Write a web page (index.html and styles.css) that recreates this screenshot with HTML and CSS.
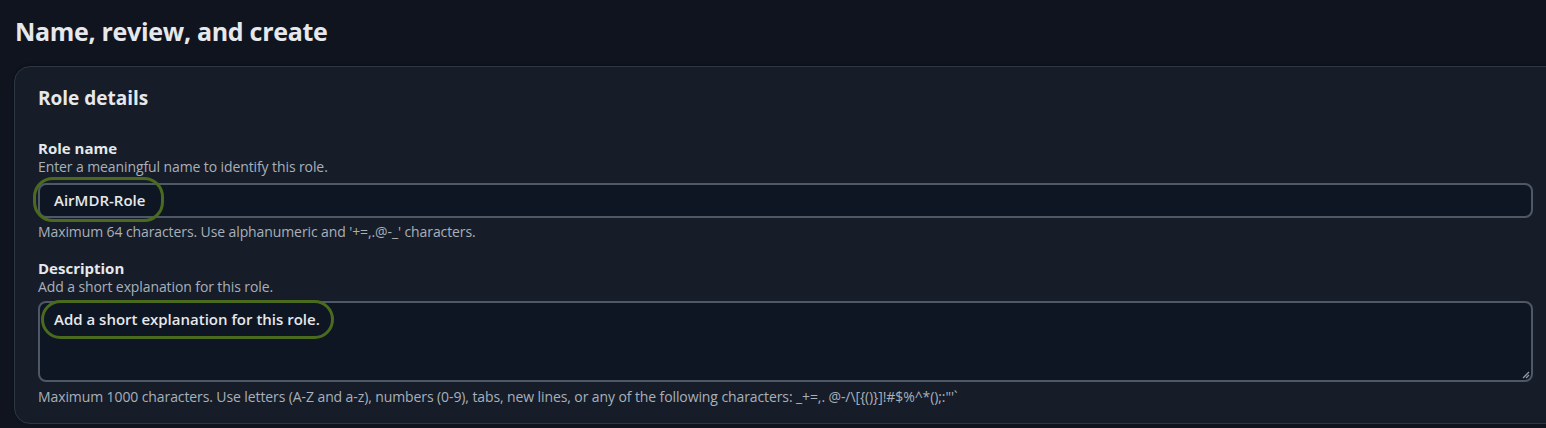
FILE: index.html
```html
<!DOCTYPE html>
<html>
<head>
<meta charset="utf-8">
<link rel="stylesheet" href="styles.css">
</head>
<body>
<h1 class="title">Name, review, and create</h1>
<section class="card">
  <h2 class="card-title">Role details</h2>
  <div class="field">
    <div class="label">Role name</div>
    <div class="hint">Enter a meaningful name to identify this role.</div>
    <div class="control">
      <div class="input">AirMDR-Role</div>
      <span class="ring ring-name"></span>
    </div>
    <div class="constraint">Maximum 64 characters. Use alphanumeric and '+=,.@-_' characters.</div>
  </div>
  <div class="field field-desc">
    <div class="label">Description</div>
    <div class="hint">Add a short explanation for this role.</div>
    <div class="control">
      <div class="textarea">Add a short explanation for this role.
        <svg class="grip" width="9" height="9" viewBox="0 0 9 9"><path d="M8 2 L2 8 M8 5 L5 8" stroke="#8d99a8" stroke-width="1.3" fill="none"/></svg>
      </div>
      <span class="ring ring-desc"></span>
    </div>
    <div class="constraint">Maximum 1000 characters. Use letters (A-Z and a-z), numbers (0-9), tabs, new lines, or any of the following characters: _+=,. @-/\[{()}]!#$%^*();:"'`</div>
  </div>
</section>
</body>
</html>
```
FILE: styles.css
```css
html, body {
  margin: 0;
  padding: 0;
  background: #0f141f;
  overflow: hidden;
}
body {
  font-family: "Open Sans", "Noto Sans", sans-serif;
  color: #e9ebed;
  width: 1546px;
  height: 428px;
}
.title {
  margin: 0;
  padding: 15px 0 0 15px;
  font-size: 25px;
  line-height: 32px;
  font-weight: 700;
  color: #e6e8eb;
  letter-spacing: -0.3px;
}
.card {
  margin: 19px -30px 0 14px;
  border: 1px solid #2e3744;
  border-radius: 16px;
  background: #161d29;
  padding: 19px 0 18px 23px;
  box-shadow: 0 -1px 3px rgba(0,0,0,0.3);
}
.card-title {
  margin: 0;
  font-size: 19px;
  line-height: 24px;
  font-weight: 700;
  color: #e6e8eb;
}
.field {
  margin-top: 29px;
  width: 1495px;
}
.field-desc { margin-top: 19px; }
.label {
  font-size: 15px;
  line-height: 18px;
  font-weight: 700;
  color: #e6e8eb;
}
.hint {
  margin-top: 2px;
  font-size: 14px;
  line-height: 16px;
  letter-spacing: -0.1px;
  color: #a8b0ba;
}
.control {
  position: relative;
  margin-top: 8px;
}
.field-desc .control { margin-top: 6px; }
.input {
  box-sizing: border-box;
  height: 35px;
  border: 2px solid #4e5866;
  border-radius: 8px;
  background: #0f1623;
  padding: 0 14px;
  font-size: 15px;
  line-height: 31px;
  font-weight: 600;
  color: #e6e8eb;
}
.textarea {
  position: relative;
  box-sizing: border-box;
  height: 81px;
  border: 2px solid #4e5866;
  border-radius: 8px;
  background: #0f1623;
  padding: 6px 14px;
  font-size: 15px;
  line-height: 20px;
  font-weight: 600;
  color: #e6e8eb;
}
.grip {
  position: absolute;
  right: 1px;
  bottom: 1px;
}
.constraint {
  margin-top: 6px;
  font-size: 14px;
  line-height: 16px;
  letter-spacing: -0.1px;
  color: #a8b0ba;
}
.field-desc .constraint { margin-top: 7px; }
.ring {
  position: absolute;
  border: 3px solid #4a6b1d;
  border-radius: 20px;
  box-sizing: border-box;
  pointer-events: none;
}
.ring-name {
  left: -5px;
  top: -6px;
  width: 131px;
  height: 45px;
}
.ring-desc {
  left: 3px;
  top: -1px;
  width: 293px;
  height: 39px;
}
```
